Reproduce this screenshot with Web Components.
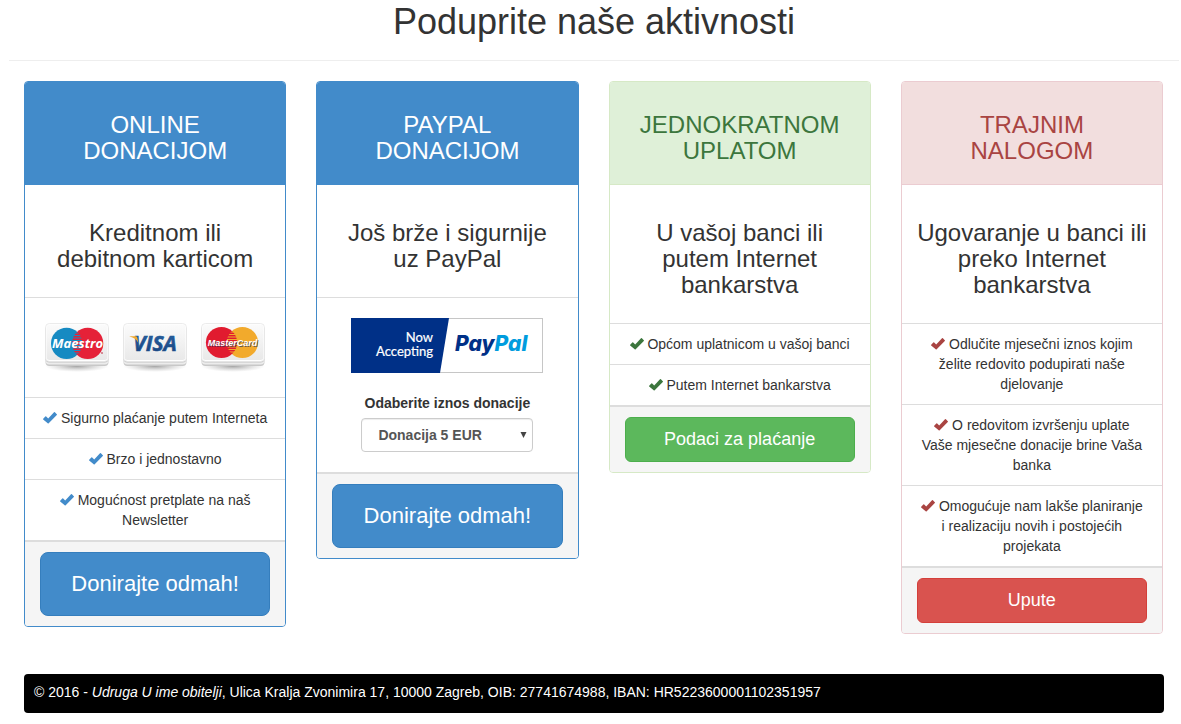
<!DOCTYPE html>
<html lang="hr">
<head>
<meta charset="utf-8">
<meta name="viewport" content="width=device-width, initial-scale=1">
<title>Poduprite naše aktivnosti</title>
<style>
  body {
    margin: 0;
    padding: 0 2px 8px 9px;
    background: #fff;
    color: #333;
    font: 14px/20px "Liberation Sans", Arial, sans-serif;
  }
</style>
</head>
<body>
<page-heading>Poduprite naše aktivnosti</page-heading>
<main>
  <donation-grid>
    <donation-card tone="primary">
      <span slot="title">ONLINE DONACIJOM</span>
      <span slot="summary">Kreditnom ili debitnom karticom</span>
      <media-row><pay-card brand="maestro"></pay-card><pay-card brand="visa"></pay-card><pay-card brand="mastercard"></pay-card></media-row>
      <check-item>Sigurno plaćanje putem Interneta</check-item>
      <check-item>Brzo i jednostavno</check-item>
      <check-item>Mogućnost pretplate na naš Newsletter</check-item>
      <action-button slot="action" size="large">Donirajte odmah!</action-button>
    </donation-card>
    <donation-card tone="primary">
      <span slot="title">PAYPAL DONACIJOM</span>
      <span slot="summary">Još brže i sigurnije uz&nbsp;PayPal</span>
      <media-row stacked><paypal-badge></paypal-badge><amount-picker></amount-picker></media-row>
      <action-button slot="action" size="large">Donirajte odmah!</action-button>
    </donation-card>
    <donation-card tone="success">
      <span slot="title">JEDNOKRATNOM UPLATOM</span>
      <span slot="summary">U vašoj banci ili putem Internet bankarstva</span>
      <check-item>Općom uplatnicom u vašoj banci</check-item>
      <check-item>Putem Internet bankarstva</check-item>
      <action-button slot="action">Podaci za plaćanje</action-button>
    </donation-card>
    <donation-card tone="danger">
      <span slot="title">TRAJNIM NALOGOM</span>
      <span slot="summary">Ugovaranje u banci ili preko Internet bankarstva</span>
      <check-item>Odlučite mjesečni iznos kojim želite redovito podupirati naše djelovanje</check-item>
      <check-item>O redovitom izvršenju uplate Vaše mjesečne donacije brine Vaša banka</check-item>
      <check-item>Omogućuje nam lakše planiranje i&nbsp;realizaciju novih i postojećih projekata</check-item>
      <action-button slot="action">Upute</action-button>
    </donation-card>
  </donation-grid>
</main>
<site-footer>© 2016 - <em>Udruga U ime obitelji</em>, Ulica Kralja Zvonimira 17, 10000 Zagreb, OIB: 27741674988, IBAN: HR5223600001102351957</site-footer>

<script>
function define(name, html, setup) {
  const template = document.createElement('template');
  template.innerHTML = html;
  customElements.define(name, class extends HTMLElement {
    constructor() {
      super();
      this.attachShadow({ mode: 'open' }).append(template.content.cloneNode(true));
    }
    connectedCallback() { if (setup) setup(this, this.shadowRoot); }
  });
}

define('page-heading', `
  <style>
    :host { display: block; border-bottom: 1px solid #eee; padding: 2px 0 18px; margin-bottom: 20px; text-align: center; }
    h1 { margin: 0; font-size: 36px; line-height: 40px; font-weight: 400; }
  </style>
  <h1><slot></slot></h1>`);

define('donation-grid', `
  <style>
    :host { display: grid; grid-template-columns: repeat(4, minmax(0, 1fr)); gap: 30px; align-items: start; padding: 0 16px 0 15px; }
    @media (max-width: 991px) { :host { grid-template-columns: repeat(2, minmax(0, 1fr)); } }
    @media (max-width: 560px) { :host { grid-template-columns: minmax(0, 1fr); } }
  </style>
  <slot></slot>`);

define('donation-card', `
  <style>
    :host { display: block; border: 1px solid var(--line); border-radius: 4px; overflow: hidden; text-align: center; background: #fff; }
    :host([tone="primary"]) { --line: #428bca; --head: #428bca; --head-text: #fff; --tick: #428bca; --button: #428bca; --button-line: #357ebd; }
    :host([tone="success"]) { --line: #d6e9c6; --head: #dff0d8; --head-text: #3c763d; --tick: #3c763d; --button: #5cb85c; --button-line: #4cae4c; }
    :host([tone="danger"]) { --line: #ebccd1; --head: #f2dede; --head-text: #a94442; --tick: #a94442; --button: #d9534f; --button-line: #d43f3a; }
    header { padding: 30px 15px 20px; background: var(--head); color: var(--head-text); border-bottom: 1px solid var(--line); }
    h2, h3 { margin: 0; font-size: 24px; line-height: 26px; font-weight: 400; }
    .summary { padding: 35px 14px 25px; }
    footer { padding: 10px 15px; background: #f5f5f5; border-top: 2px solid #ddd; }
  </style>
  <header><h2><slot name="title"></slot></h2></header>
  <div class="summary"><h3><slot name="summary"></slot></h3></div>
  <div role="list"><slot></slot></div>
  <footer><slot name="action"></slot></footer>`);

define('media-row', `
  <style>
    :host { display: flex; justify-content: center; gap: 14px; border-top: 1px solid #ddd; padding: 20px 15px; }
    :host([stacked]) { flex-direction: column; align-items: center; gap: 20px; }
  </style>
  <slot></slot>`, el => el.setAttribute('role', 'listitem'));

define('check-item', `
  <style>
    :host { display: block; border-top: 1px solid #ddd; padding: 10px 16px; }
    svg { width: 14px; height: 12px; vertical-align: -1px; fill: var(--tick); }
  </style>
  <svg viewBox="0 0 14 12" aria-hidden="true"><path d="M.2 6.7 2.3 4.5a.6.6 0 0 1 .9 0l2 1.900L11 .3a.6.6 0 0 1 .9 0l1.900 1.900a.6.6 0 0 1 0 .9L5.700 11.300a.7.7 0 0 1-1 0L.2 7.600a.6.6 0 0 1 0-.9Z"/></svg>
  <slot></slot>`, el => el.setAttribute('role', 'listitem'));

define('action-button', `
  <style>
    :host { display: block; }
    button { display: block; width: 100%; box-sizing: border-box; margin: 0; padding: 10px 15px; border: 1px solid var(--button-line); border-radius: 6px; background: var(--button); color: #fff; font: inherit; font-size: 18px; line-height: 23px; cursor: pointer; }
    :host([size="large"]) button { padding: 16px 15px; border-radius: 8px; font-size: 22px; line-height: 30px; }
    button:hover { filter: brightness(.93); }
  </style>
  <button type="button"><slot></slot></button>`);

const brands = {
  maestro: `
    <clipPath id="c"><circle cx="21.6" cy="25.4" r="15.6"/></clipPath>
    <circle cx="21.6" cy="25.4" r="15.6" fill="#168ac2"/><circle cx="42.7" cy="25.4" r="15.6" fill="#e52138"/>
    <g clip-path="url(#c)"><path d="M27 15h11M27 17.5h11M27 20h11M27 22.5h11M27 25h11M27 27.5h11M27 30h11M27 32.5h11M27 35h11" stroke="#168ac2" stroke-width="1.1"/></g>
    <g font-family="Open Sans, sans-serif" font-weight="700" font-style="italic" font-size="13">
      <text x="32.6" y="30" text-anchor="middle" fill="#fff">Maestro</text></g>
    <circle cx="57" cy="35" r=".8" fill="#b7132b"/>`,
  visa: `
    <linearGradient id="v" x2="0" y2="1"><stop stop-color="#2a68a9"/><stop offset="1" stop-color="#173c78"/></linearGradient>
    <g font-family="Open Sans, sans-serif" font-weight="700" font-style="italic" font-size="21">
      <text x="32" y="33" text-anchor="middle" fill="url(#v)" stroke="#20538f" stroke-width=".6">VISA</text></g>
    <path d="M6.6 18.2h5.7c1.2 0 1.8.5 2 1.6l1 5c-1.7-3.4-4.5-5.3-8.7-6.3Z" fill="#efa92d"/>`,
  mastercard: `
    <clipPath id="c"><circle cx="41.4" cy="24.5" r="15.6"/></clipPath>
    <circle cx="41.4" cy="24.5" r="15.6" fill="#f2aa2c"/><circle cx="20.5" cy="24.5" r="15.6" fill="#e11b2f"/>
    <g clip-path="url(#c)"><path d="M25.5 14h11M25.5 16.5h11M25.5 19h11M25.5 21.5h11M25.5 24h11M25.5 26.5h11M25.5 29h11M25.5 31.5h11M25.5 34h11" stroke="#f2aa2c" stroke-width="1.1"/></g>
    <g font-family="Liberation Sans, Arial, sans-serif" font-weight="700" font-style="italic" font-size="9">
      <text x="31.5" y="28" text-anchor="middle" fill="#fff" style="text-shadow:1px 1px 0 #26355bb0">MasterCard</text></g>`
};
define('pay-card', `
  <style>
    :host { display: block; flex: none; }
    svg { display: block; width: 64px; height: 59px; }
  </style>
  <svg viewBox="0 0 64 59" role="img">
    <defs>
      <linearGradient id="face" x2="0" y2="1"><stop stop-color="#fbfbfb"/><stop offset="1" stop-color="#e9e9e9"/></linearGradient>
      <radialGradient id="shade"><stop stop-color="#777" stop-opacity=".7"/><stop offset="1" stop-color="#aaa" stop-opacity="0"/></radialGradient>
    </defs>
    <ellipse cx="32" cy="48" rx="32" ry="6" fill="url(#shade)"/>
    <rect x=".5" y="9" width="63" height="39" rx="4" fill="#c8c8c8"/>
    <rect x=".5" y="8" width="63" height="38.5" rx="4" fill="#ececec"/>
    <rect x=".5" y="7" width="63" height="37.5" rx="4" fill="#c4c4c4"/>
    <rect x=".5" y="5.5" width="63" height="38" rx="4" fill="#fff" stroke="#e6e6e6" stroke-width=".8"/>
    <rect x="1.5" y="6.5" width="61" height="35.5" rx="3" fill="url(#face)"/>
    <g id="brand"></g>
  </svg>`, (el, root) => {
    root.querySelector('svg').setAttribute('aria-label', el.getAttribute('brand'));
    root.getElementById('brand').innerHTML = brands[el.getAttribute('brand')];
  });

define('paypal-badge', `
  <style>
    :host { display: block; }
    svg { display: block; width: 192px; height: 55px; }
    .word { font-feature-settings: "cv11"; }
  </style>
  <svg viewBox="0 0 192 55" role="img" aria-label="Now accepting PayPal">
    <rect x=".5" y=".5" width="191" height="54" fill="#fff" stroke="#c6c6c6"/>
    <path d="M0 0h98l-9 55H0Z" fill="#003087"/>
    <g font-family="Lato, sans-serif" font-size="13" fill="#fff" stroke="#fff" stroke-width=".2" text-anchor="end">
      <text x="82" y="24">Now</text><text x="82" y="38">Accepting</text></g>
    <text class="word" x="104" y="33" font-family="Inter, sans-serif" font-weight="800" font-style="italic" font-size="21" fill="#003087">Pay<tspan fill="#009cde">Pal</tspan></text>
  </svg>`);

define('amount-picker', `
  <style>
    :host { display: block; width: 172px; font-weight: 700; }
    label { display: block; margin-bottom: 5px; }
    .box { position: relative; }
    select { display: block; width: 100%; height: 34px; box-sizing: border-box; margin: 0; padding: 6px 16px; border: 1px solid #ccc; border-radius: 4px; background: #fff; color: #555; font: inherit; appearance: none; box-shadow: inset 0 1px 1px #00000013; }
    svg { position: absolute; right: 6px; top: 14px; width: 7px; height: 6px; fill: #444; pointer-events: none; }
  </style>
  <label for="amount">Odaberite iznos donacije</label>
  <div class="box">
    <select id="amount"><option>Donacija 5 EUR</option><option>Donacija 10 EUR</option><option>Donacija 20 EUR</option></select>
    <svg viewBox="0 0 7 6" aria-hidden="true"><path d="M.5 0h6l-3 6Z"/></svg>
  </div>`);

define('site-footer', `
  <style>
    :host { display: block; margin: 40px 15px 0; }
    footer { padding: 8px 10px 11px; border-radius: 4px; background: #000; color: #fff; }
  </style>
  <footer><slot></slot></footer>`);
</script>
</body>
</html>
